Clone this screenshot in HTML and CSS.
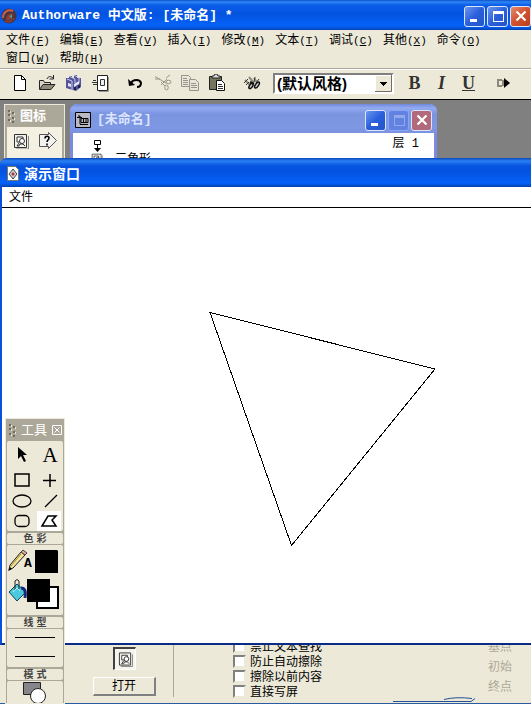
FILE: index.html
```html
<!DOCTYPE html>
<html lang="zh-CN">
<head>
<meta charset="utf-8">
<title>Authorware 中文版: [未命名] *</title>
<link rel="stylesheet" href="styles.css">
</head>
<body>
<svg class="defs" width="0" height="0" aria-hidden="true">
  <symbol id="display-icon" viewBox="0 0 16 16">
    <path d="M1.500 1.500h12v13h-12z" fill="#f4f2ec" stroke="#333"/>
    <path d="M15.500 3v13H3" fill="none" stroke="#888"/>
    <path d="M4 4h6v5H4z" fill="#fff" stroke="#333"/>
    <circle cx="9" cy="8" r="2.500" fill="#fff" stroke="#333"/>
    <path d="M6 10l-2 3h2l1-2 3 0 2 2" fill="none" stroke="#333"/>
  </symbol>
  <symbol id="grip" viewBox="0 0 7 14">
    <path d="M0 1h2v2H0zM4 3h2v2H4zM0 5h2v2H0zM4 8h2v2H4zM0 10h2v2H0zM4 12h2v2H4z" fill="#6e6a5c"/>
    <path d="M2 2h1v2H2zM6 4h1v2H6zM2 6h1v2H2zM6 9h1v2H6zM2 11h1v2H2z" fill="#e8e5d8"/>
  </symbol>
  <symbol id="win-min" viewBox="0 0 18 18"><path d="M4 12h7v3H4z" fill="#fff"/></symbol>
  <symbol id="win-max" viewBox="0 0 18 18"><path d="M4 4h11v11H4zM5 7v7h9V7z" fill="#fff" fill-rule="evenodd"/></symbol>
  <symbol id="win-close" viewBox="0 0 18 18"><path d="M4.500 4.500l9 9M13.500 4.500l-9 9" stroke="#fff" stroke-width="2.200"/></symbol>
</svg>

<div class="app">
  <header class="titlebar">
    <svg width="16" height="16" viewBox="0 0 16 16">
      <circle cx="8" cy="8" r="7.500" fill="#4a3440"/>
      <path d="M2 10C2 4 7 1 12 3" fill="none" stroke="#c8604a" stroke-width="2"/>
      <path d="M5 12C5 7 8 5 12 6l-1 5-4 2z" fill="#8f3b36"/>
      <path d="M8 9l3-3v4z" fill="#4d9a86"/>
      <path d="M4 13c3 2 7 1 9-3" fill="none" stroke="#a44a3e"/>
    </svg>
    <h1 class="title">Authorware 中文版: [未命名] *</h1>
    <div class="win-buttons">
      <button class="win-btn" aria-label="最小化"><svg width="18" height="18"><use href="#win-min"/></svg></button>
      <button class="win-btn" aria-label="最大化"><svg width="18" height="18"><use href="#win-max"/></svg></button>
      <button class="win-btn close" aria-label="关闭"><svg width="18" height="18"><use href="#win-close"/></svg></button>
    </div>
  </header>

  <nav class="menu">
    <button>文件<span>(<u>F</u>)</span></button>
    <button>编辑<span>(<u>E</u>)</span></button>
    <button>查看<span>(<u>V</u>)</span></button>
    <button>插入<span>(<u>I</u>)</span></button>
    <button>修改<span>(<u>M</u>)</span></button>
    <button>文本<span>(<u>T</u>)</span></button>
    <button>调试<span>(<u>C</u>)</span></button>
    <button>其他<span>(<u>X</u>)</span></button>
    <button>命令<span>(<u>O</u>)</span></button>
    <button>窗口<span>(<u>W</u>)</span></button>
    <button>帮助<span>(<u>H</u>)</span></button>
  </nav>

  <div class="toolbar">
    <div class="group">
      <button aria-label="新建"><svg width="18" height="18" viewBox="0 0 18 18"><path d="M3.500 1.500h7l4 4v11h-11z" fill="#fff" stroke="#000"/><path d="M10.500 1.500v4h4" fill="none" stroke="#000"/></svg></button>
      <button aria-label="打开"><svg width="18" height="18" viewBox="0 0 18 18"><path d="M1.500 15V6.500h4l1 2h6V11" fill="#d8d5c4" stroke="#222"/><path d="M1.500 15.500L5 10.500h12l-4 5z" fill="#8f8c7c" stroke="#222"/><path d="M9 5c1-3 4-3 6-1M15.500 1v4h-4" fill="none" stroke="#222"/></svg></button>
      <button aria-label="全部保存"><svg width="18" height="18" viewBox="0 0 18 18"><path d="M1 4h3V2h3v2h2V1h3v3h4v9l-5 4L1 14z" fill="#54549a"/><path d="M2 5l5 2v9M4 2l6 3v4M9 1l5 3v5" fill="none" stroke="#c9c9ea"/><path d="M3 9l3 1v3l-3-1zM9 10l5-3v3l-5 3z" fill="#e6e6f6"/><path d="M9 13h2v3H9zM13 11h2v3h-2z" fill="#23234f"/></svg></button>
      <button aria-label="导入"><svg width="18" height="18" viewBox="0 0 18 18"><path d="M5.500 1.500h10v15h-10z" fill="#fff" stroke="#222"/><path d="M16.500 3v14.500H7" fill="none" stroke="#999"/><path d="M8.500 5.500h4v6h-4z" fill="#eee" stroke="#333"/><path d="M1 6.500h3M0 8.500h5M1 10.500h4" stroke="#333"/></svg></button>
    </div>
    <div class="group">
      <button aria-label="撤消"><svg width="18" height="18" viewBox="0 0 18 18"><path d="M4 9c2-4 9-4 10 0 0 3-2 4-4 4" fill="none" stroke="#000" stroke-width="2"/><path d="M1 5l1 7 6-1z"/></svg></button>
      <button aria-label="剪切"><svg width="18" height="18" viewBox="0 0 18 18" fill="none" stroke="#9a978a"><path d="M1 2.500l11 6.500M13 5L7 11M1 5h5M12 4l4-3"/><ellipse cx="14.500" cy="8" rx="2.500" ry="1.700"/><ellipse cx="12.500" cy="13.500" rx="1.700" ry="2.500"/><path d="M7 8l4 4"/></svg></button>
      <button aria-label="复制"><svg width="18" height="18" viewBox="0 0 18 18" fill="#e9e6d9" stroke="#96938a"><path d="M.500 1.500h7l2 2v9h-9zM2 4.500h4M2 6.500h5M2 8.500h5M2 10.500h5"/><path d="M8.500 5.500h6l3 3v8h-9zM10 9.500h5M10 11.500h6M10 13.500h6"/></svg></button>
      <button aria-label="粘贴"><svg width="18" height="18" viewBox="0 0 18 18"><path d="M1.500 2.500h12v13h-12z" fill="#77745d" stroke="#222"/><path d="M4 4V2h2l1-2h2l1 2h2v2z" fill="#ddd" stroke="#222"/><path d="M8.500 6.500h5l3 3v7h-8z" fill="#fff" stroke="#111"/><path d="M10 10.500h4M10 12.500h5M10 14.500h5" stroke="#333"/></svg></button>
    </div>
    <div class="group">
      <button aria-label="查找"><svg width="18" height="18" viewBox="0 0 18 18" fill="none"><path d="M2 6l5 5M6 3l5 6M11 4l4 6" stroke="#8d8a7d" stroke-width="2"/><path d="M1 9l4-4M3 11l3-3M12 3l-1 5M16 5l-3 4" stroke="#333"/><ellipse cx="8" cy="12" rx="1.500" ry="3" fill="#ccc" stroke="#111" stroke-width="1.500" transform="rotate(35 8 12)"/><ellipse cx="14" cy="11" rx="1.500" ry="3.500" fill="#ccc" stroke="#111" stroke-width="1.500" transform="rotate(35 14 11)"/><path d="M7 8l4 2" stroke="#111" stroke-width="2"/></svg></button>
    </div>
    <label class="style-select">
      <select aria-label="文本风格"><option>(默认风格)</option></select>
      <svg width="17" height="17" viewBox="0 0 17 17"><path d="M0 0h17v17H0z" fill="#ece9d8"/><path d="M.500 16V.500H16" fill="none" stroke="#fff"/><path d="M0 16.500h16.500V0" fill="none" stroke="#716f64"/><path d="M5 7h7v1h-1v1h-1v1H9v1H8v-1H7V9H6V8H5z"/></svg>
    </label>
    <div class="group format">
      <button class="bold">B</button>
      <button class="italic">I</button>
      <button class="under">U</button>
    </div>
    <div class="group">
      <button aria-label="更多"><svg width="18" height="18" viewBox="0 0 18 18"><path d="M2 5h5v2H4v4h3v2H2zM7 6h2v6H7z" fill="#8c897c"/><path d="M9 4l6 5-6 5z"/></svg></button>
    </div>
  </div>

  <main class="desktop">
    <section class="palette icons-palette">
      <header><svg width="7" height="14"><use href="#grip"/></svg><h2>图标</h2></header>
      <div class="icon-row">
        <button aria-label="显示图标"><svg width="16" height="16"><use href="#display-icon"/></svg></button>
        <button aria-label="判断图标"><svg width="20" height="18" viewBox="0 0 20 18"><path d="M1.500 2.500h9V.500l8 8-8 8v-2h-9z" fill="#f4f2f0" stroke="#555"/><path d="M7 6.500c0-3 4-3 4-.500 0 2-2 2-2 4M9 11.500v2" fill="none" stroke="#000" stroke-width="1.600"/></svg></button>
        <button aria-label="移动图标"><svg width="16" height="16" viewBox="0 0 16 16"><path d="M1 4C3 0 11 0 14 4v6H1z" fill="#3f6fae"/></svg></button>
      </div>
    </section>

    <section class="flow-window">
      <header class="flow-title">
        <svg width="16" height="16" viewBox="0 0 16 16"><path d="M.500.500h15v15H.500z" fill="#b9b9c4" stroke="#000"/><path d="M3 4h2v8M2 5.500h5M6 6.500h7v4H6zM8.500 7v3M11 7v3M5 12.500h8" fill="none" stroke="#000"/></svg>
        <h2>[未命名]</h2>
        <div class="win-buttons">
          <button class="win-btn" aria-label="最小化"><svg width="18" height="18"><use href="#win-min"/></svg></button>
          <button class="win-btn dim" aria-label="最大化" disabled><svg width="18" height="18"><use href="#win-max"/></svg></button>
          <button class="win-btn close" aria-label="关闭"><svg width="18" height="18"><use href="#win-close"/></svg></button>
        </div>
      </header>
      <div class="flow-body">
        <div class="flow-line">
          <svg width="11" height="13" viewBox="0 0 11 13"><path d="M2.500 1.500h6v4h-6zM5.500 6v5" fill="#fff" stroke="#000"/><path d="M2 9h7l-3.500 4z"/></svg>
          <div class="flow-node"><svg width="12" height="12"><use href="#display-icon"/></svg><span>三角形</span></div>
        </div>
        <span class="level">层 1</span>
      </div>
    </section>

    <section class="properties">
      <div class="preview">
        <div class="thumb"><svg width="15" height="16"><use href="#display-icon"/></svg></div>
        <button class="open">打开</button>
      </div>
      <div class="options">
        <label><input type="checkbox">禁止文本查找</label>
        <label><input type="checkbox">防止自动擦除</label>
        <label><input type="checkbox">擦除以前内容</label>
        <label><input type="checkbox">直接写屏</label>
      </div>
      <div class="points"><span>基点</span><span>初始</span><span>终点</span></div>
      <svg class="edge-mark" width="84" height="6" viewBox="0 0 84 6"><path d="M1 4.500h78l4-3M52 2.500q12-3 28-1" fill="none" stroke="#24509a"/></svg>
    </section>

    <section class="stage-window">
      <header class="stage-title">
        <svg width="12" height="15" viewBox="0 0 12 15"><path d="M.500.500h8l3 3v11H.500z" fill="#fff" stroke="#777"/><path d="M6 3l4 5-4 5-4-5z" fill="#ccc" stroke="#444"/><circle cx="6" cy="8" r="1.500" fill="#a33"/></svg>
        <h2>演示窗口</h2>
      </header>
      <nav class="stage-menu"><button>文件</button></nav>
      <svg class="stage" aria-label="三角形"><path d="M208 104.500L433 161 289.500 337.500z" fill="none" stroke="#000" shape-rendering="crispEdges"/></svg>
    </section>

    <section class="palette tools-palette">
      <header>
        <svg width="7" height="14"><use href="#grip"/></svg><h2>工具</h2>
        <button aria-label="关闭工具"><svg width="10" height="10" viewBox="0 0 10 10"><path d="M.500.500h9v9h-9zM2.500 2.500l5 5M7.500 2.500l-5 5" fill="none" stroke="#fff"/></svg></button>
      </header>
      <div class="tools">
        <button aria-label="选择"><svg width="20" height="18" viewBox="0 0 20 18"><path d="M6 1v12l3-3 3 6 2-1-3-6h4z"/></svg></button>
        <button class="text-tool">A</button>
        <button aria-label="矩形"><svg width="20" height="18" viewBox="0 0 20 18"><path d="M3 3h14v12H3z" fill="none" stroke="#000" stroke-width="1.500"/></svg></button>
        <button aria-label="直线"><svg width="20" height="18" viewBox="0 0 20 18"><path d="M10 3v13M3 9.500h13" stroke="#000" stroke-width="1.500"/></svg></button>
        <button aria-label="椭圆"><svg width="20" height="18" viewBox="0 0 20 18"><ellipse cx="10" cy="9" rx="9" ry="6" fill="none" stroke="#000" stroke-width="1.300"/></svg></button>
        <button aria-label="斜线"><svg width="20" height="18" viewBox="0 0 20 18"><path d="M5 15L17 3" stroke="#000" stroke-width="1.300"/></svg></button>
        <button aria-label="圆角矩形"><svg width="20" height="18" viewBox="0 0 20 18"><rect x="3" y="3.500" width="14" height="11" rx="4" fill="none" stroke="#000" stroke-width="1.300"/></svg></button>
        <button class="selected" aria-label="多边形"><svg width="20" height="18" viewBox="0 0 20 18"><path d="M3 14L9 4h8l-4 4 4 6z" fill="none" stroke="#000" stroke-width="1.500"/></svg></button>
      </div>
      <h3>色 彩</h3>
      <div class="colors">
        <button aria-label="线条颜色">
          <svg width="53" height="28" viewBox="0 0 53 28"><path d="M2 23l1-5L14 5l4 3L6 21z" fill="#f1e39a" stroke="#222"/><path d="M4 19l10-12" stroke="#a98a35"/><path d="M1 24l2-4 2 2z"/><path d="M14 5l2-2 4 3-2 2z" fill="#e9a6a0" stroke="#444"/><path d="M28 3h22l1 1v22H28z"/></svg>
        </button>
        <span class="color-a">A</span>
        <button aria-label="填充颜色">
          <svg width="53" height="36" viewBox="0 0 53 36"><path d="M2 17l8-8 9 8-9 9z" fill="#4cc8dc" stroke="#145"/><path d="M8 15V6q2-3 4 0v8" fill="none" stroke="#222"/><path d="M14 13c4 0 5 3 4 10" fill="none" stroke="#17277c" stroke-width="3"/><path d="M6 17l4-4 3 3" fill="none" stroke="#b8f3fa"/><path d="M30 12h21v21H30z" fill="#fff" stroke="#000" stroke-width="2"/><path d="M20 4h23v23H20z"/></svg>
        </button>
      </div>
      <h3>线 型</h3>
      <div class="lines"><hr><hr></div>
      <h3>模 式</h3>
      <div class="mode"><button aria-label="模式"><svg width="28" height="24" viewBox="0 0 28 24"><path d="M3.500 1.500h17v12h-17z" fill="#85858a" stroke="#222"/><circle cx="18" cy="15" r="7.500" fill="#fff" stroke="#222"/></svg></button></div>
    </section>
  </main>
</div>
</body>
</html>
```
FILE: styles.css
```css
* { box-sizing: border-box; }

body {
  margin: 0;
  background: #ece9d8;
  color: #000;
  font: 12px/18px "Liberation Sans", "Noto Sans CJK SC", sans-serif;
}

h1, h2, h3 { margin: 0; font-weight: bold; white-space: nowrap; }

button {
  margin: 0;
  padding: 0;
  border: 0;
  background: none;
  color: inherit;
  font: inherit;
}

svg { display: block; flex: none; }
.defs { position: absolute; }

.app {
  display: flex;
  flex-direction: column;
  height: 100vh;
  overflow: hidden;
}

/* Main title bar */
.titlebar {
  display: flex;
  align-items: center;
  flex: none;
  gap: 5px;
  height: 30px;
  padding: 2px 0 0 1px;
  background: linear-gradient(#0a52c8 0, #2f86f5 2px, #0a5ee8 5px, #0453e0 14px, #0562f8 25px, #0556e0 28px, #0340b0 30px);
  color: #fff;
}

.title {
  font: bold 13px/18px "Liberation Mono", "Noto Sans CJK SC", monospace;
  white-space: pre;
}

.win-buttons { display: flex; gap: 2px; margin-left: auto; }

.win-btn {
  width: 21px;
  height: 21px;
  padding: 0 1px;
  border: 1px solid #dbe6fb;
  border-radius: 3px;
  background: linear-gradient(135deg, #6a97ee, #2a5fdc 50%, #2455c8);
}

.win-btn.close { background: linear-gradient(135deg, #e58a70, #d2502e 50%, #b8401f); }

/* Menu */
.menu {
  display: flex;
  flex-wrap: wrap;
  flex: none;
  gap: 0 10px;
  padding: 1px 6px;
  border-bottom: 1px solid #aca899;
}

.menu button { height: 18px; white-space: nowrap; }
.menu span { font: 11px/16px "Liberation Mono", monospace; }

/* Toolbar */
.toolbar {
  display: flex;
  align-items: center;
  flex: none;
  height: 31px;
  padding: 0 6px 3px;
  border-top: 1px solid #fff;
  border-bottom: 1px solid #000;
}

.group { display: flex; margin-right: 8px; }

.group button {
  display: flex;
  align-items: center;
  justify-content: center;
  width: 27px;
  height: 24px;
}

.style-select { position: relative; width: 126px; margin-right: 7px; }

.style-select select {
  display: block;
  width: 100%;
  height: 21px;
  padding: 0 2px;
  border: 2px solid;
  border-color: #808080 #fff #fff #808080;
  border-radius: 0;
  background: #fff;
  color: #000;
  font: bold 15px/17px "Liberation Sans", "Noto Sans CJK SC", sans-serif;
  appearance: none;
}

.style-select svg { position: absolute; top: 2px; right: 2px; pointer-events: none; }

.format { color: #333; font: bold 18px/24px "Liberation Serif", serif; }
.italic { font-style: italic; }
.under { text-decoration: underline; }

/* Desktop with free-floating windows */
.desktop {
  position: relative;
  flex: 1;
  min-height: 0;
  overflow: hidden;
  background: #808080;
}

.palette {
  position: absolute;
  border: 1px solid #ece9d8;
  background: #aca899;
}

.palette header {
  display: flex;
  align-items: center;
  gap: 5px;
  height: 22px;
  padding: 0 2px 0 3px;
  color: #fff;
}

.palette h2 { font-size: 13px; }

.icons-palette { top: 4px; left: 4px; width: 61px; height: 60px; }

.icon-row {
  display: grid;
  grid-template-columns: 28px 26px;
  grid-auto-rows: 28px 24px;
  place-items: center;
  margin: 0 2px;
  background: #f4f1e2;
}

.flow-window {
  position: absolute;
  top: 4px;
  left: 70px;
  width: 367px;
  height: 80px;
  border: solid #7b8be0;
  border-width: 0 3px;
  border-radius: 7px 7px 0 0;
  background: #fff;
}

.flow-title {
  display: flex;
  align-items: center;
  gap: 6px;
  height: 29px;
  margin: 0 -3px;
  padding: 3px 5px 0;
  border-radius: 7px 7px 0 0;
  background: linear-gradient(#7088dc, #93abf0 4px, #7a94e0 10px, #7f98e4 24px, #7b92dd);
  color: #dbe4ff;
}

.flow-title h2 { font: bold 13px/18px "Liberation Mono", "Noto Sans CJK SC", monospace; }
.flow-title .close { background: #b06a7c; }
.flow-title .dim { border-color: #8ca6f4; background: #6282e2; }
.flow-title .dim svg { opacity: .3; }

.flow-body {
  display: flex;
  justify-content: space-between;
  padding: 2px 15px 0 18px;
}

.flow-line { padding-top: 4px; }
.flow-line > svg { margin-left: 1px; }
.flow-node { display: flex; align-items: center; gap: 12px; height: 14px; }
.level { font-family: "Liberation Mono", "Noto Sans CJK SC", monospace; }

.stage-window {
  position: absolute;
  top: 58px;
  right: 0;
  bottom: 59px;
  left: 0;
  display: flex;
  flex-direction: column;
  border: solid #0a2a88;
  border-width: 0 0 2px;
  border-left: 2px solid #0a50d8;
  border-radius: 7px 0 0 0;
  background: #fff;
}

.stage-title {
  display: flex;
  align-items: center;
  flex: none;
  gap: 5px;
  height: 29px;
  margin-left: -2px;
  padding: 2px 7px 0;
  border-radius: 7px 0 0 0;
  background: linear-gradient(#0a48b8, #2a80f4 3px, #0553e0 8px, #0453e0 14px, #0562fa 25px, #0340b0);
  color: #fff;
}

.stage-title h2 { font-size: 14px; }
.stage-menu { flex: none; height: 21px; padding: 1px 7px 0; border-bottom: 1px solid #000; }
.stage { flex: 1; width: 100%; min-height: 0; }

/* Property panel */
.properties {
  position: absolute;
  right: 0;
  bottom: 0;
  left: 0;
  display: flex;
  height: 59px;
  padding-left: 76px;
  border-bottom: 1px solid #2a5ca0;
  background: #ece9d8;
  overflow: hidden;
}

.preview {
  display: flex;
  flex-direction: column;
  align-items: center;
  gap: 7px;
  width: 98px;
  height: 52px;
  padding-top: 2px;
  border-right: 1px solid #aca899;
}

.thumb {
  padding: 2px 2px 2px 3px;
  border: 1px solid;
  border-width: 2px 1px 1px 2px;
  border-color: #404040 #fff #fff #404040;
  background: #f6f4ee;
}

.open {
  width: 63px;
  height: 19px;
  border: 1px solid;
  border-width: 1px 2px 2px 1px;
  border-color: #fff #808080 #808080 #fff;
  line-height: 15px;
}

.options { margin: -6px 0 0 59px; }
.options label { display: flex; align-items: center; gap: 4px; height: 15px; }

.options input {
  width: 13px;
  height: 13px;
  margin: 0;
  border: 2px solid;
  border-color: #808080 #ece9d8 #ece9d8 #808080;
  background: #fff;
  appearance: none;
}

.points {
  display: flex;
  flex-direction: column;
  gap: 2px;
  margin: -7px 19px 0 auto;
  color: #aca899;
}

.edge-mark { position: absolute; right: 55px; bottom: 0; }

/* Drawing tools */
.tools-palette { bottom: 0; left: 5px; width: 60px; height: 286px; overflow: hidden; }
.tools-palette h2 { font-weight: normal; }
.tools-palette header button { margin-left: auto; }

.tools, .colors, .lines, .mode, .tools-palette h3 {
  margin: 0 1px;
  border-radius: 2px;
  background: #ece9d8;
}

.tools {
  display: grid;
  grid-template-columns: 30px 1fr;
  grid-template-rows: 28px 22px 20px 20px;
}

.tools button { display: flex; align-items: center; justify-content: center; }
.tools .text-tool { font: 21px/24px "Liberation Serif", serif; }
.tools .selected { margin-right: 2px; background: #fff; }

.tools-palette h3 {
  margin-top: 2px;
  margin-bottom: 1px;
  color: #444;
  font-size: 10px;
  line-height: 11px;
  text-align: center;
}

.colors { position: relative; height: 70px; padding-top: 2px; }
.color-a { position: absolute; top: 11px; left: 17px; font: bold 13px/16px "Liberation Mono", monospace; }
.colors button { display: block; }

.lines { display: flex; flex-direction: column; gap: 18px; height: 38px; padding: 8px 8px 0; }
.lines hr { width: 100%; margin: 0; border: 0; border-top: 1px solid #000; }

.mode { height: 30px; padding-left: 13px; }
```
